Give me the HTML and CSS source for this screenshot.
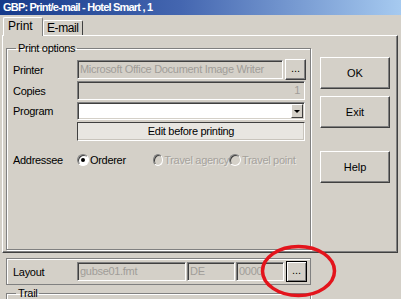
FILE: index.html
```html
<!DOCTYPE html>
<html lang="en">
<head>
    <meta charset="UTF-8">
    <title>GBP: Print/e-mail</title>
    <link rel="stylesheet" href="styles.css">
</head>
<body>
    <div class="window">
        <div class="titlebar">GBP: Print/e-mail - Hotel Smart , 1</div>
        <div class="tabs">
            <div class="tab active">Print</div>
            <div class="tab">E-mail</div>
        </div>
        <div class="panel">
            <fieldset class="group options">
                <legend>Print options</legend>
                <div class="row first">
                    <label>Printer</label>
                    <div class="field disabled printer">Microsoft Office Document Image Writer</div>
                    <button type="button" class="dots">...</button>
                </div>
                <div class="row">
                    <label>Copies</label>
                    <div class="field disabled full right">1</div>
                </div>
                <div class="row">
                    <label>Program</label>
                    <div class="field select full"><span class="arrow"></span></div>
                </div>
                <div class="row">
                    <label></label>
                    <div class="field edit full">Edit before printing</div>
                </div>
                <div class="row radios">
                    <label>Addressee</label>
                    <span class="radio-item"><span class="radio checked"></span>Orderer</span>
                    <span class="radio-item off"><span class="radio"></span>Travel agency</span>
                    <span class="radio-item off"><span class="radio"></span>Travel point</span>
                </div>
            </fieldset>
            <div class="side">
                <button type="button" class="btn">OK</button>
                <button type="button" class="btn">Exit</button>
                <button type="button" class="btn help">Help</button>
            </div>
        </div>
        <div class="layout-box">
            <label>Layout</label>
            <div class="field disabled fmt">gubse01.fmt</div>
            <div class="field disabled lang">DE</div>
            <div class="field disabled code">0000</div>
            <button type="button" class="dots default">...</button>
        </div>
        <fieldset class="group trail">
            <legend>Trail</legend>
            <div class="row">
                <label></label>
                <div class="field trail-field"></div>
            </div>
        </fieldset>
        <!-- red marker drawn over the layout button -->
        <svg class="marker" width="401" height="299" viewBox="0 0 401 299">
            <ellipse cx="298.5" cy="271" rx="36" ry="24.5" fill="none" stroke="#e3141c" stroke-width="3.5"/>
        </svg>
    </div>
</body>
</html>
```

FILE: styles.css
```css
body {
    margin: 0;
    background: #d4d0c8;
    font-family: "Liberation Sans", Arial, sans-serif;
    font-size: 11px;
    letter-spacing: -0.3px;
    color: #000;
}
.window {
    position: relative;
    width: 401px;
    height: 299px;
    overflow: hidden;
}
.titlebar {
    height: 15px;
    line-height: 15px;
    padding-left: 3px;
    background: linear-gradient(to right, #163a8a, #4466b0 45%, #a6caf0);
    color: #fff;
    font-weight: bold;
    letter-spacing: -0.8px;
    white-space: nowrap;
}
.tabs {
    display: flex;
    align-items: flex-end;
    height: 20px;
    padding-left: 3px;
}
.tab {
    width: 40px;
    height: 15px;
    line-height: 15px;
    box-sizing: border-box;
    padding-left: 3px;
    border: 1px solid;
    border-color: #fff #404040 transparent #fff;
    border-bottom: none;
    border-radius: 2px 2px 0 0;
    font-size: 12px;
    letter-spacing: -0.4px;
    white-space: nowrap;
}
.tab.active {
    height: 19px;
    line-height: 17px;
    padding-left: 4px;
    margin-bottom: -1px;
    position: relative;
    background: #d4d0c8;
    border-right-color: #808080;
    letter-spacing: 0;
    z-index: 1;
}
.panel {
    display: flex;
    gap: 9px;
    width: 396px;
    height: 218px;
    margin-left: 2px;
    box-sizing: border-box;
    padding: 6px 0 0 3px;
    border: 1px solid;
    border-color: #fff #404040 #404040 #fff;
    box-shadow: inset -1px -1px 0 #808080;
}
.group {
    margin: 0;
    min-inline-size: 0;
    border: 1px solid #808080;
    box-shadow: inset 1px 1px 0 #fff, 1px 1px 0 #fff;
}
.group legend {
    margin-left: 3px;
    padding: 0 2px;
    line-height: 13px;
}
.options {
    width: 305px;
    height: 208px;
    box-sizing: border-box;
    padding: 4px 4px 0 6px;
}
.row {
    display: flex;
    align-items: center;
    height: 19px;
    margin-bottom: 1px;
}
.row.first {
    height: 21px;
}
.row label {
    width: 64px;
    flex: none;
}
.field {
    height: 19px;
    line-height: 17px;
    box-sizing: border-box;
    padding: 0 2px;
    border: 1px solid;
    border-color: #808080 #fff #fff #808080;
    box-shadow: inset 1px 1px 0 #404040, inset -1px -1px 0 #d4d0c8;
    white-space: nowrap;
    overflow: hidden;
}
.field.disabled {
    color: #a09d98;
}
.printer {
    width: 206px;
}
.full {
    width: 228px;
}
.right {
    text-align: right;
    padding-right: 4px;
}
.select {
    position: relative;
    height: 18px;
    background: #fff;
}
.arrow {
    position: absolute;
    right: 1px;
    top: 1px;
    width: 12px;
    height: 14px;
    box-sizing: border-box;
    background: #d4d0c8;
    border: 1px solid;
    border-color: #fff #404040 #404040 #fff;
}
.arrow::after {
    content: "";
    position: absolute;
    left: 2px;
    top: 5px;
    border-left: 3px solid transparent;
    border-right: 3px solid transparent;
    border-top: 3px solid #000;
}
.edit {
    margin-top: 1px;
    background: #e8e6e1;
    text-align: center;
    border-color: #404040 #fff #fff #404040;
    box-shadow: inset -1px -1px 0 #c8c4bc;
}
.dots {
    width: 21px;
    height: 21px;
    margin-left: 2px;
    padding: 0 0 3px;
    box-sizing: border-box;
    font: inherit;
    line-height: 12px;
    vertical-align: bottom;
    background: #d4d0c8;
    border: 1px solid;
    border-color: #fff #404040 #404040 #fff;
    box-shadow: inset -1px -1px 0 #808080;
}
.dots.default {
    border: 1px solid #000;
    box-shadow: inset 1px 1px 0 #fff, inset -1px -1px 0 #808080;
}
.radios {
    margin-top: 10px;
}
.radio-item {
    display: flex;
    align-items: center;
    width: 76px;
    flex: none;
    white-space: nowrap;
}
.radio-item.off {
    color: #a5a29c;
    text-shadow: 1px 1px 0 rgba(255, 255, 255, 0.5);
}
.radio {
    position: relative;
    width: 12px;
    height: 12px;
    margin-right: 1px;
    box-sizing: border-box;
    border-radius: 50%;
    border: 1px solid;
    border-color: #808080 #fff #fff #808080;
    box-shadow: inset 1px 1px 0 #404040;
    background: #d4d0c8;
}
.radio.checked {
    background: #fff;
}
.radio.checked::after {
    content: "";
    position: absolute;
    left: 3px;
    top: 3px;
    width: 4px;
    height: 4px;
    border-radius: 50%;
    background: #000;
}
.side {
    display: flex;
    flex-direction: column;
    padding-top: 15px;
}
.btn {
    width: 70px;
    height: 32px;
    margin-bottom: 7px;
    font: inherit;
    background: #d4d0c8;
    border: 1px solid;
    border-color: #fff #404040 #404040 #fff;
    box-shadow: inset -1px -1px 0 #808080;
}
.btn.help {
    margin-top: 16px;
}
.layout-box {
    display: flex;
    align-items: center;
    width: 305px;
    height: 27px;
    margin: 5px 0 0 6px;
    box-sizing: border-box;
    padding-left: 6px;
    border: 1px solid #808080;
    box-shadow: inset 1px 1px 0 #fff;
}
.layout-box label {
    width: 64px;
}
.fmt {
    width: 109px;
}
.lang {
    width: 48px;
    margin-left: 1px;
}
.code {
    width: 48px;
    margin-left: 1px;
}
.trail {
    width: 305px;
    margin: 2px 0 0 6px;
    box-sizing: border-box;
    padding: 0 4px 0 6px;
}
.trail-field {
    width: 228px;
    margin-top: 1px;
}
.marker {
    position: absolute;
    left: 0;
    top: 0;
    pointer-events: none;
}
```
